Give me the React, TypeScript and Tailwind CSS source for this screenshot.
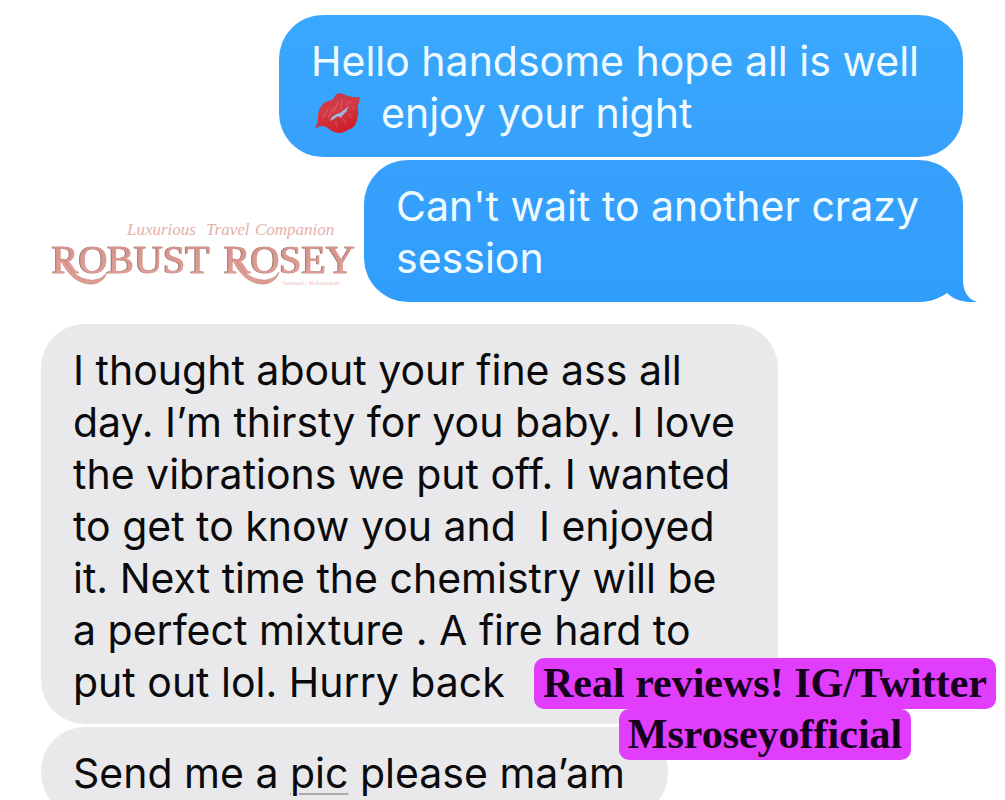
import type { ReactNode } from "react";

function Lips() {
  return (
    <svg viewBox="0 0 46 42" className="mr-5 ml-1 inline-block h-[42px] w-[46px] align-[-6px]" role="img" aria-label="Kiss mark">
      <defs>
        <linearGradient id="lip" x1="0" y1="0" x2="0.4" y2="1">
          <stop offset="0" stopColor="#c23a4a" />
          <stop offset="0.5" stopColor="#d23a45" />
          <stop offset="1" stopColor="#cf202b" />
        </linearGradient>
      </defs>
      <path
        d="M0 36 C3 32 3 27 3 23 C4 16 7 12 11 10 C14 8 17 9 19 6 C20 2 24 0 28 2 C33 4 38 6 45 5 C45 10 42 13 43 17 C43 20 44 23 42 27 C42 31 39 36 35 37 C32 38 29 41 25 41 C20 41 17 39 14 37 C12 35 9 34 6 34 C4 34 2 36 0 36 Z"
        fill="url(#lip)"
      />
      <path d="M15 29 C16 25 20 22 25 21 L34 14 L31 20 C29 22 27 23 26 26 L23 24 L19 27 Z" fill="#9bb9e2" />
      <path
        d="M8 26 L13 17 M13 26 L19 15 M19 20 L23 10 M26 17 L27 8 M31 13 L36 9 M37 14 L40 18 M33 21 L37 26 M28 27 L31 32 M21 30 L22 35"
        stroke="#e8808a"
        strokeWidth="1.6"
        strokeOpacity="0.3"
        fill="none"
      />
    </svg>
  );
}

function Logo() {
  return (
    <svg viewBox="0 0 310 86" className="h-[86px] w-[310px]" role="img" aria-label="Robust Rosey">
      <defs>
        <linearGradient id="rose" x1="0" y1="0" x2="0" y2="1">
          <stop offset="0" stopColor="#cf8d85" />
          <stop offset="1" stopColor="#e6a59c" />
        </linearGradient>
      </defs>
      <g fill="#e6b0ab" fontFamily="Liberation Serif, serif" fontStyle="italic" fontSize="17">
        <text x="79" y="19">Luxurious</text>
        <text x="158" y="19">Travel</text>
        <text x="207" y="19">Companion</text>
      </g>
      <g
        className="drop-shadow-[-1px_0px_0px_#8f706d]"
        fontFamily="Liberation Serif, serif"
        fontSize="40"
        fill="url(#rose)"
        stroke="#dc9a91"
        strokeWidth="0.6"
      >
        <text x="4" y="57">ROBUST</text>
        <text x="176" y="57">ROSEY</text>
      </g>
      <g fill="#e09c93" stroke="#a87670" strokeWidth="0.4">
        <path d="M16 43 C20 53 29 63 43 64 C50 64 55 62 59 56 C57 65 48 69 40 68 C26 66 18 55 12 43 Z" />
        <path d="M188 43 C192 53 201 63 215 64 C222 64 227 62 231 56 C229 65 220 69 212 68 C198 66 190 55 184 43 Z" />
      </g>
      <text x="234" y="69" fontFamily="Liberation Serif, serif" fontSize="7" fill="#ecc0bc">
        Sensual / Relaxation
      </text>
    </svg>
  );
}

function Sent({ children, tail }: { children: ReactNode; tail?: boolean }) {
  return (
    <div
      className={
        tail
          ? "relative w-fit rounded-[44px] bg-linear-to-b from-[#37a0fc] to-[#309dfd] pt-5 pr-11 pb-[18px] pl-8 text-[#f0fbff]"
          : "w-fit rounded-[44px] bg-linear-to-b from-[#38a8fd] to-[#37a1fc] pt-5 pr-11 pb-[18px] pl-8 text-[#f0fbff]"
      }
    >
      {children}
      {tail && (
        <svg viewBox="0 0 60 60" className="absolute -right-[14px] bottom-0 h-[60px] w-[60px]" aria-hidden="true">
          <defs>
            <linearGradient id="tail" gradientUnits="userSpaceOnUse" x1="0" y1="0" x2="0" y2="60">
              <stop offset="0" stopColor="#339efd" />
              <stop offset="1" stopColor="#309dfd" />
            </linearGradient>
          </defs>
          <path d="M46 12 V38 C46 48 50 57 60 60 C48 61 37 58 30 51 C20 58 10 60 0 60 Z" fill="url(#tail)" />
        </svg>
      )}
    </div>
  );
}

export default function App() {
  return (
    <main className="relative flex h-screen flex-col overflow-hidden bg-white pt-[15px] font-['Inter',sans-serif] text-[41px] leading-[52px] whitespace-nowrap">
      <section className="flex flex-col items-end gap-[3px] pr-[42px]">
        <Sent>
          <p>
            Hello handsome hope all is well
            <br />
            <Lips />
            enjoy your night
          </p>
        </Sent>
        <div className="flex w-full items-end justify-end gap-[6px]">
          <Logo />
          <Sent tail>
            <p>
              Can't wait to another crazy
              <br />
              session
            </p>
          </Sent>
        </div>
      </section>
      <section className="mt-[22px] flex flex-col items-start gap-[3px] pl-[41px] text-[#0b0b0d]">
        <p className="rounded-[44px] bg-[#e9e9eb] pt-5 pr-[43px] pb-4 pl-8">
          I thought about your fine ass all
          <br />
          day. I’m thirsty for you baby. I love
          <br />
          the vibrations we put off. I wanted
          <br />
          to get to know you and &nbsp;I enjoyed
          <br />
          it. Next time the chemistry will be
          <br />
          a perfect mixture . A fire hard to
          <br />
          put out lol. Hurry back
        </p>
        <p className="rounded-[44px] bg-[#e9e9eb] pt-5 pr-[43px] pb-[18px] pl-8">
          Send me a{" "}
          <span className="underline decoration-[#aaaaac] decoration-2 underline-offset-[5px]">pic</span> please ma’am
        </p>
      </section>
      <aside className="absolute right-[9px] bottom-[40px] flex flex-col items-center font-['Liberation_Serif',serif] text-[42px] font-bold text-[#16001c]">
        <span className="rounded-[10px] bg-[#e03dfc] px-[9px] leading-[51px]">Real reviews! IG/Twitter</span>
        <span className="rounded-[10px] bg-[#e03dfc] px-[9px] leading-[51px]">Msroseyofficial</span>
      </aside>
    </main>
  );
}
